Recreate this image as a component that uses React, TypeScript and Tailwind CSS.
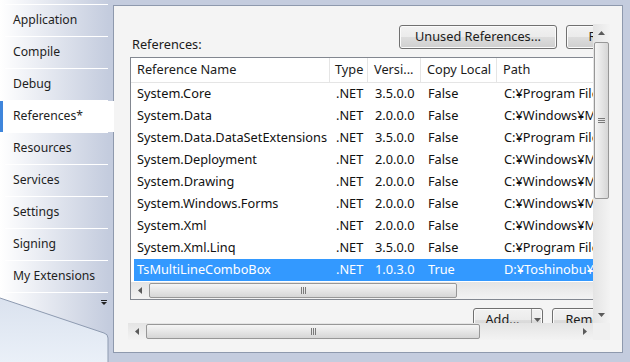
import React from "react";

type RefRow = {
  name: string;
  type: string;
  version: string;
  copyLocal: string;
  path: string;
  selected?: boolean;
};

const tabs = [
  "Application",
  "Compile",
  "Debug",
  "References*",
  "Resources",
  "Services",
  "Settings",
  "Signing",
  "My Extensions",
];

const rows: RefRow[] = [
  { name: "System.Core", type: ".NET", version: "3.5.0.0", copyLocal: "False", path: "C:¥Program Files" },
  { name: "System.Data", type: ".NET", version: "2.0.0.0", copyLocal: "False", path: "C:¥Windows¥Microsoft" },
  { name: "System.Data.DataSetExtensions", type: ".NET", version: "3.5.0.0", copyLocal: "False", path: "C:¥Program Files" },
  { name: "System.Deployment", type: ".NET", version: "2.0.0.0", copyLocal: "False", path: "C:¥Windows¥Microsoft" },
  { name: "System.Drawing", type: ".NET", version: "2.0.0.0", copyLocal: "False", path: "C:¥Windows¥Microsoft" },
  { name: "System.Windows.Forms", type: ".NET", version: "2.0.0.0", copyLocal: "False", path: "C:¥Windows¥Microsoft" },
  { name: "System.Xml", type: ".NET", version: "2.0.0.0", copyLocal: "False", path: "C:¥Windows¥Microsoft" },
  { name: "System.Xml.Linq", type: ".NET", version: "3.5.0.0", copyLocal: "False", path: "C:¥Program Files" },
  { name: "TsMultiLineComboBox", type: ".NET", version: "1.0.3.0", copyLocal: "True", path: "D:¥Toshinobu¥Documents", selected: true },
];

const btn =
  "flex h-[24px] shrink-0 items-center justify-center rounded-[3px] border border-[#707070] bg-[linear-gradient(to_bottom,#f2f2f2_0%,#ebebeb_50%,#dddddd_50%,#cfcfcf_100%)] shadow-[inset_0_0_0_1px_#fbfbfb] text-[12.75px] text-[#1b1b1b]";

function Arrow({ dir }: { dir: "up" | "down" | "left" | "right" }) {
  const d = {
    up: "M0 4 L3.5 0 L7 4 Z",
    down: "M0 0 L7 0 L3.5 4 Z",
    left: "M4 0 L4 7 L0 3.5 Z",
    right: "M0 0 L0 7 L4 3.5 Z",
  }[dir];
  const horiz = dir === "left" || dir === "right";
  return (
    <svg width={horiz ? 4 : 7} height={horiz ? 7 : 4} viewBox={horiz ? "0 0 4 7" : "0 0 7 4"}>
      <path d={d} fill="#5a5a5a" />
    </svg>
  );
}

function VScrollBar() {
  return (
    <div className="flex h-full w-[17px] flex-col bg-[linear-gradient(to_right,#e4e4e4,#f3f3f3)]">
      <div className="flex h-[17px] items-center justify-center">
        <Arrow dir="up" />
      </div>
      <div className="mx-[1px] mt-[1px] flex h-[157px] items-center justify-center rounded-[2px] border border-[#979797] bg-[linear-gradient(to_right,#f5f5f5,#e6e6e6_50%,#d6d6d6)]">
        <svg width="7" height="5" viewBox="0 0 7 5">
          <rect x="0" y="0" width="7" height="1" fill="#7a7a7a" />
          <rect x="0" y="2" width="7" height="1" fill="#7a7a7a" />
          <rect x="0" y="4" width="7" height="1" fill="#7a7a7a" />
        </svg>
      </div>
      <div className="flex-1" />
      <div className="flex h-[17px] items-center justify-center">
        <Arrow dir="down" />
      </div>
    </div>
  );
}

function HScrollBar({ thumb, showRight }: { thumb: number; showRight?: boolean }) {
  return (
    <div className="flex h-[17px] w-full items-stretch bg-[linear-gradient(to_bottom,#e4e4e4,#f3f3f3)]">
      <div className="flex w-[17px] shrink-0 items-center justify-center">
        <Arrow dir="left" />
      </div>
      <div
        className="my-[1px] ml-[1px] flex shrink-0 items-center justify-center rounded-[2px] border border-[#979797] bg-[linear-gradient(to_bottom,#f5f5f5,#e6e6e6_50%,#d6d6d6)]"
        style={{ width: thumb }}
      >
        <svg width="5" height="7" viewBox="0 0 5 7">
          <rect x="0" y="0" width="1" height="7" fill="#7a7a7a" />
          <rect x="2" y="0" width="1" height="7" fill="#7a7a7a" />
          <rect x="4" y="0" width="1" height="7" fill="#7a7a7a" />
        </svg>
      </div>
      <div className="flex-1" />
      {showRight && (
        <div className="flex w-[17px] shrink-0 items-center justify-center">
          <Arrow dir="right" />
        </div>
      )}
    </div>
  );
}

function Sidebar() {
  return (
    <div className="flex w-[113px] shrink-0 flex-col">
      <div className="bg-[linear-gradient(to_right,#ffffff_0%,#c4ccde_96%)] pt-[4px]">
        <div className="ml-[5px] h-px w-[103px] bg-white" />
        {tabs.map((t, i) => {
          const sel = i === 3;
          return (
            <div key={t}>
              {sel ? (
                <div className="relative z-10 flex h-[31px] w-[114px] items-center border-l-[3px] border-[#3f86dc] bg-white pl-[10px] text-[12.2px] text-[#1e1e1e]">
                  {t}
                </div>
              ) : (
                <div className="flex h-[31px] items-center pl-[13px] text-[12.2px] text-[#1e1e1e]">{t}</div>
              )}
              <div className="ml-[5px] h-px w-[103px] bg-white" />
            </div>
          );
        })}
      </div>
      <svg width="113" height="69" viewBox="0 0 113 69" className="block">
        <defs>
          <linearGradient id="tabg" x1="0" y1="0" x2="113" y2="0" gradientUnits="userSpaceOnUse">
            <stop offset="0" stopColor="#ffffff" />
            <stop offset="0.96" stopColor="#c4ccde" />
          </linearGradient>
          <linearGradient id="lowg" x1="0" y1="0" x2="0" y2="69" gradientUnits="userSpaceOnUse">
            <stop offset="0" stopColor="#d9e1ee" />
            <stop offset="1" stopColor="#eaf0f8" />
          </linearGradient>
        </defs>
        <rect x="0" y="0" width="113" height="69" fill="url(#lowg)" />
        <path d="M0 0 H113 V69 H108 V45 Q108 41 104 40 L0 5 Z" fill="url(#tabg)" />
        <path d="M0 5 L104 40 Q108 41 108 45 V69" fill="none" stroke="#8d9ab0" strokeWidth="1" />
        <rect x="101" y="7" width="6" height="1" fill="#222" />
        <path d="M101 9 H107 L104 12 Z" fill="#222" />
      </svg>
    </div>
  );
}

function ReferenceList() {
  const cols = "shrink-0 whitespace-nowrap overflow-hidden";
  return (
    <div className="ml-[2px] mt-[5px] w-[540px] border border-[#828790] bg-white">
      <div className="flex h-[25px] items-stretch border-b border-[#e5e5e5] text-[12.75px] text-[#1b1b1b]">
        <div className={`${cols} flex w-[199px] items-center border-r border-[#e5e5e5] pl-[6px]`}>Reference Name</div>
        <div className={`${cols} flex w-[38px] items-center border-r border-[#e5e5e5] pl-[5px]`}>Type</div>
        <div className={`${cols} flex w-[53px] items-center border-r border-[#e5e5e5] pl-[6px]`}>Versi...</div>
        <div className={`${cols} flex w-[76px] items-center border-r border-[#e5e5e5] pl-[6px]`}>Copy Local</div>
        <div className={`${cols} flex w-[170px] items-center pl-[6px]`}>Path</div>
      </div>
      {rows.map((r) => (
        <div
          key={r.name}
          className={`ml-[3px] flex h-[22px] items-center text-[12.75px] ${
            r.selected ? "bg-[#3399ff] text-white" : "text-[#111]"
          }`}
        >
          <div className={`${cols} w-[196px] pl-[3px]`}>{r.name}</div>
          <div className={`${cols} w-[38px] pl-[6px]`}>{r.type}</div>
          <div className={`${cols} w-[53px] pl-[7px]`}>{r.version}</div>
          <div className={`${cols} w-[76px] pl-[7px]`}>{r.copyLocal}</div>
          <div className={`${cols} w-[170px] pl-[7px]`}>{r.path}</div>
        </div>
      ))}
      <div className="mt-[1px]">
        <HScrollBar thumb={308} />
      </div>
    </div>
  );
}

export default function App() {
  return (
    <div className="flex h-[362px] w-[630px] overflow-hidden bg-[#c4ccde] font-['Noto_Sans',sans-serif]">
      <Sidebar />
      <div className="pt-[5px]">
        <div className="h-[348px] w-[510px] border border-[#8e99ad] bg-[#f4f4f4] pl-[14px] pt-[18px]">
          <div className="grid grid-cols-[465px_17px] grid-rows-[299px_17px]">
            <div className="min-w-0 overflow-hidden">
              <div className="w-[700px]">
                <div className="mt-[1px] flex items-start">
                  <div className="w-[271px] shrink-0 pl-[4px] pt-[11px] text-[12.75px] leading-[16px] text-[#1b1b1b]">
                    References:
                  </div>
                  <div className={`${btn} w-[158px]`}>Unused References...</div>
                  <div className={`${btn} ml-[9px] w-[152px]`}>Reference Paths...</div>
                </div>
                <ReferenceList />
                <div className="mt-[8px] flex pl-[345px]">
                  <div className={`${btn} w-[70px] justify-start`}>
                    <span className="w-[57px] text-center">Add...</span>
                    <span className="h-full w-px bg-[#9a9a9a]" />
                    <span className="flex flex-1 items-center justify-center">
                      <Arrow dir="down" />
                    </span>
                  </div>
                  <div className={`${btn} ml-[9px] w-[75px]`}>Remove</div>
                </div>
              </div>
            </div>
            <VScrollBar />
            <HScrollBar thumb={334} showRight />
            <div className="bg-[#f0f0f0]" />
          </div>
        </div>
      </div>
    </div>
  );
}
